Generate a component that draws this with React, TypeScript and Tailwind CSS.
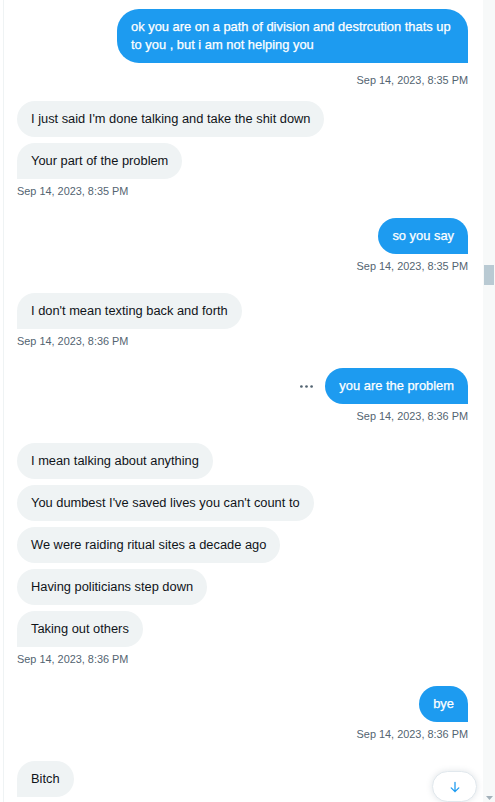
import React from "react";

type Msg = string;

function Timestamp({ text, right, extra = "" }: { text: string; right?: boolean; extra?: string }) {
  return (
    <div
      className={`h-[16px] text-[10.9px] leading-[16px] text-[#536471] whitespace-nowrap ${right ? "self-end" : "self-start"} ${extra}`}
    >
      {text}
    </div>
  );
}

function Sent({ msgs, time, dots, tsClass = "mt-[3.5px]" }: { msgs: Msg[]; time: string; dots?: boolean; tsClass?: string }) {
  return (
    <div className="flex flex-col items-end">
      <div className="flex flex-col items-end gap-[6px]">
        {msgs.map((m, i) => (
          <div key={i} className="flex items-center gap-[10px]">
            {dots && i === msgs.length - 1 && (
              <svg width="17" height="17" viewBox="0 0 17 17" className="shrink-0">
                <circle cx="3.4" cy="8.5" r="1.35" fill="#536471" />
                <circle cx="8.5" cy="8.5" r="1.35" fill="#536471" />
                <circle cx="13.6" cy="8.5" r="1.35" fill="#536471" />
              </svg>
            )}
            <div
              className={`max-w-[351px] bg-[#1d9bf0] text-white text-[12.9px] leading-[18px] px-[14px] py-[9px] rounded-[22px] [-webkit-text-stroke:0.25px_white] ${
                i === msgs.length - 1 ? "rounded-br-none" : ""
              }`}
            >
              {m}
            </div>
          </div>
        ))}
      </div>
      <Timestamp text={time} right extra={tsClass} />
    </div>
  );
}

function Received({ msgs, time }: { msgs: Msg[]; time?: string }) {
  return (
    <div className="flex flex-col items-start">
      <div className="flex flex-col items-start gap-[6px]">
        {msgs.map((m, i) => (
          <div
            key={i}
            className={`max-w-[351px] bg-[#eff3f4] text-[#0f1419] text-[12.85px] leading-[18px] px-[14px] py-[9px] rounded-[22px] ${
              i === msgs.length - 1 ? "rounded-bl-none" : ""
            }`}
          >
            {m}
          </div>
        ))}
      </div>
      {time && <Timestamp text={time} extra="mt-[3.5px]" />}
    </div>
  );
}

export default function App() {
  return (
    <div className="relative flex h-[802px] w-[495px] overflow-hidden bg-white font-['Liberation_Sans',Arial,sans-serif]">
      <div className="w-[3px] shrink-0" />
      <div className="w-px shrink-0 bg-[#eff3f4]" />
      <div className="flex min-w-0 flex-1 flex-col pl-[13px] pr-[15px] pt-[9px]">
        <Sent
          msgs={["ok you are on a path of division and destrcution thats up to you , but i am not helping you"]}
          time="Sep 14, 2023, 8:35 PM"
          tsClass="mt-[9px]"
        />
        <div className="h-[13px] shrink-0" />
        <Received msgs={["I just said I'm done talking and take the shit down", "Your part of the problem"]} time="Sep 14, 2023, 8:35 PM" />
        <div className="h-[19.5px] shrink-0" />
        <Sent msgs={["so you say"]} time="Sep 14, 2023, 8:35 PM" />
        <div className="h-[19.5px] shrink-0" />
        <Received msgs={["I don't mean texting back and forth"]} time="Sep 14, 2023, 8:36 PM" />
        <div className="h-[19.5px] shrink-0" />
        <Sent msgs={["you are the problem"]} time="Sep 14, 2023, 8:36 PM" dots />
        <div className="h-[19.5px] shrink-0" />
        <Received
          msgs={[
            "I mean talking about anything",
            "You dumbest I've saved lives you can't count to",
            "We were raiding ritual sites a decade ago",
            "Having politicians step down",
            "Taking out others",
          ]}
          time="Sep 14, 2023, 8:36 PM"
        />
        <div className="h-[19.5px] shrink-0" />
        <Sent msgs={["bye"]} time="Sep 14, 2023, 8:36 PM" />
        <div className="h-[19.5px] shrink-0" />
        <Received msgs={["Bitch"]} />
      </div>
      <div className="flex w-[12px] shrink-0 flex-col bg-[#f7f9f9]">
        <div className="h-[265px] shrink-0" />
        <div className="mx-[1px] h-[20px] shrink-0 bg-[#b9cad3]" />
        <div className="mt-auto mb-[2px] flex justify-center">
          <svg width="7" height="4" viewBox="0 0 7 4">
            <path d="M0 0h7L3.5 4z" fill="#a3b1ba" />
          </svg>
        </div>
      </div>
      <button className="absolute right-[18px] top-[771px] flex h-[31px] w-[45px] items-center justify-center rounded-full border border-[#e1e8ed] bg-white shadow-[0_0_6px_rgba(101,119,134,0.2)]">
        <svg width="14" height="14" viewBox="0 0 24 24" fill="none" stroke="#1d9bf0" strokeWidth="2.2" strokeLinecap="round" strokeLinejoin="round">
          <path d="M12 4v16M5.5 13.5L12 20l6.5-6.5" />
        </svg>
      </button>
    </div>
  );
}
